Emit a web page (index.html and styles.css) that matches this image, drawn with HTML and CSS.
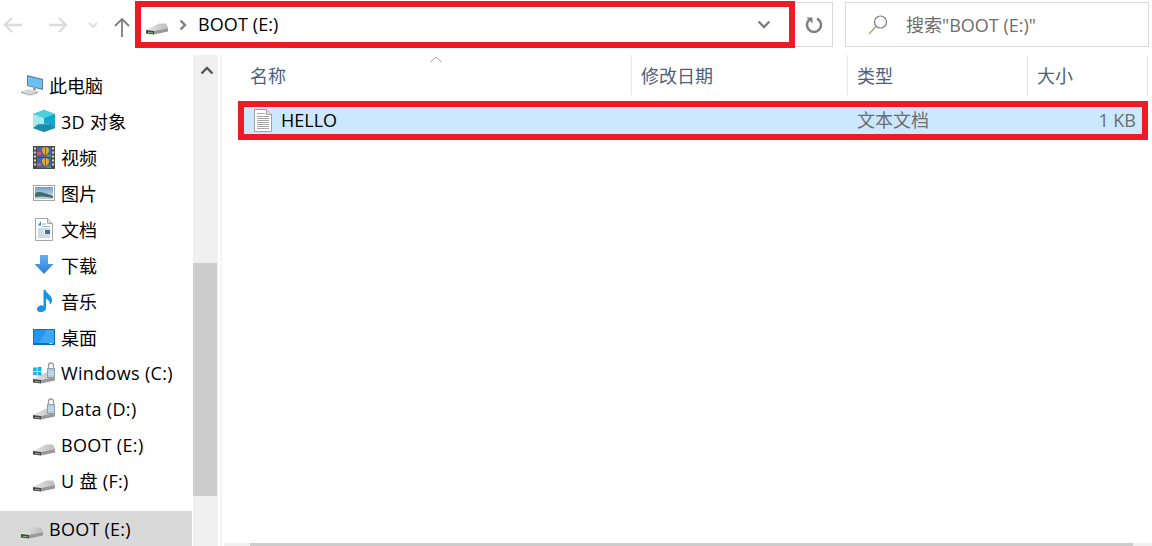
FILE: index.html
```html
<!doctype html>
<html lang="zh-CN">
<head>
    <meta charset="UTF-8">
    <title>BOOT (E:)</title>
    <link rel="stylesheet" href="styles.css">
</head>
<body>
    <svg class="defs" width="0" height="0">
      <defs>
        <linearGradient id="driveTop" x1="0" y1="0" x2="1" y2="0">
          <stop offset="0" stop-color="#e6e6e6"/>
          <stop offset="1" stop-color="#bcbcbc"/>
        </linearGradient>
        <linearGradient id="arrowBlue" x1="0" y1="0" x2="0" y2="1">
          <stop offset="0" stop-color="#62aef0"/>
          <stop offset="1" stop-color="#2a80d4"/>
        </linearGradient>
        <linearGradient id="sky" x1="0" y1="0" x2="0" y2="1">
          <stop offset="0" stop-color="#6f9fc8"/>
          <stop offset="1" stop-color="#dfe9ee"/>
        </linearGradient>
        <symbol id="drive" viewBox="0 0 24 24">
          <path d="M1 17 14 10.500h7l2 4.500-14 3z" fill="url(#driveTop)"/>
          <path d="M9 18 23 15v3.500L9 21.500z" fill="#989898"/>
          <path d="M1 17l8 1v3.500l-8-1z" fill="#444"/>
          <path d="M3 18.800l5 .600v1l-5-.600z" fill="#7ec27a"/>
        </symbol>
        <symbol id="lock" viewBox="0 0 8 16">
          <path d="M1.500 7V3.500a2.500 2.500 0 0 1 5 0V7" fill="none" stroke="#9c9c9c" stroke-width="1.300"/>
          <rect x=".500" y="6.500" width="7" height="9" fill="#aecbde" stroke="#8ca2b0"/>
          <path d="M1 10h6M1 12.500h6" stroke="#d0e2ed"/>
        </symbol>
      </defs>
    </svg>

    <header class="toolbar">
      <div class="nav">
        <svg class="nav-btn" width="20" height="18" viewBox="0 0 20 18"><path d="M19 9H2M9 2 2 9l7 7" fill="none" stroke="#dcdcdc" stroke-width="2.400"/></svg>
        <svg class="nav-btn next" width="20" height="18" viewBox="0 0 20 18"><path d="M0 9h17M10 2l7 7-7 7" fill="none" stroke="#dcdcdc" stroke-width="2.400"/></svg>
        <svg class="nav-caret" width="10" height="6" viewBox="0 0 10 6"><path d="m1 1 4 4 4-4" fill="none" stroke="#dcdcdc" stroke-width="1.800"/></svg>
        <svg class="nav-up" width="16" height="20" viewBox="0 0 16 20"><path d="M8 20V2M1 9l7-7 7 7" fill="none" stroke="#7f7f7f" stroke-width="1.800"/></svg>
      </div>
      <div class="address">
        <svg class="icon" width="24" height="24"><use href="#drive"/></svg>
        <svg class="crumb" width="8" height="12" viewBox="0 0 8 12"><path d="m1.500 1.500 4.500 4.500-4.500 4.500" fill="none" stroke="#7f7f7f" stroke-width="2.400"/></svg>
        <span class="address-text">BOOT (E:)</span>
        <svg class="address-caret" width="14" height="9" viewBox="0 0 14 9"><path d="m1.500 1.500 5.500 5.500 5.500-5.500" fill="none" stroke="#7f7f7f" stroke-width="2.400"/></svg>
      </div>
      <div class="refresh">
        <svg width="18" height="19" viewBox="0 0 18 19"><path d="M6 3.600a7 7 0 1 0 6 0" fill="none" stroke="#7f7f7f" stroke-width="2.400"/><path d="M1.500 2.500H7.500V8.500z" fill="#7f7f7f"/></svg>
      </div>
      <div class="search">
        <svg width="22" height="22" viewBox="0 0 22 22"><circle cx="13.500" cy="8" r="6" fill="none" stroke="#7f7f7f" stroke-width="1.200"/><path d="M9 12.500 2 20" stroke="#c8a078" stroke-width="1.500"/></svg>
        <span>搜索"BOOT (E:)"</span>
      </div>
    </header>

    <div class="main">
      <nav class="sidebar">
        <ul class="tree">
          <li class="tree-item top">
            <svg class="icon" width="24" height="24" viewBox="0 0 24 24">
              <path d="M7 1 23 5v11L7 12z" fill="#5d7f9c"/>
              <path d="M8 2.500 22 6v8.500L8 11.500z" fill="#6cc0f6"/>
              <path d="M13 13.500h3v3h-3z" fill="#9aa4ac"/>
              <path d="M1 17.500 9 15l9 2.500-8 3z" fill="#d5d9dc"/>
              <path d="M1 17.500v1.500l9 2.500 8-2.500v-1.500l-8 3z" fill="#a2a9ae"/>
            </svg>
            <span>此电脑</span>
          </li>
          <li class="tree-item">
            <svg class="icon" width="24" height="24" viewBox="0 0 24 24">
              <path d="M12 0 23 4v14l-11 4L1 18V4z" fill="#14a4cc"/>
              <path d="M12 0 23 4 12 8 1 4z" fill="#4fcfde"/>
              <path d="M1 4l11 4v14L1 18z" fill="#a8ecee"/>
              <path d="M1 18l5.500-4H17l6 4-11 4z" fill="#1a8da8"/>
              <path d="M6.500 4v10M6.500 14H17" stroke="#7fdde6" stroke-width=".600" fill="none"/>
            </svg>
            <span class="en">3D 对象</span>
          </li>
          <li class="tree-item">
            <svg class="icon" width="24" height="24" viewBox="0 0 24 24">
              <rect x="1" y="0" width="22" height="23" fill="#4a4a4a"/>
              <path d="M2 1.500h2v2H2zM2 5.500h2v2H2zM2 9.500h2v2H2zM2 13.500h2v2H2zM2 17.500h2v2H2zM20 1.500h2v2h-2zM20 5.500h2v2h-2zM20 9.500h2v2h-2zM20 13.500h2v2h-2zM20 17.500h2v2h-2z" fill="#d8d8d8"/>
              <rect x="5" y="1" width="14" height="10" fill="#3d68b0"/>
              <rect x="5" y="12" width="14" height="10" fill="#3d68b0"/>
              <path d="M10 4.500a3.500 3.500 0 0 1 7 0c0 2-2 3-2.500 4.500h-2C12 7.500 10 6.500 10 4.500zM10 15.500a3.500 3.500 0 0 1 7 0c0 2-2 3-2.500 4.500h-2c-.500-1.500-2.500-2.500-2.500-4.500z" fill="#e9a82a"/>
              <path d="M13.500 1v8M13.500 12v8" stroke="#a84f32"/>
              <path d="M5 6h4v3H5zM5 17h4v3H5z" fill="#d8567c"/>
              <path d="M15 9h4v2h-4zM15 20h4v2h-4z" fill="#58a050"/>
            </svg>
            <span>视频</span>
          </li>
          <li class="tree-item">
            <svg class="icon" width="24" height="24" viewBox="0 0 24 24">
              <rect x="1.500" y="3.500" width="21" height="15" fill="#fff" stroke="#a6a6a6"/>
              <rect x="3" y="5" width="18" height="12" fill="url(#sky)"/>
              <path d="M3 11c4-2 7-1 18 3v3H3z" fill="#3f6f70"/>
              <path d="M3 15c6-1 12-.500 18 1v1H3z" fill="#c3cfc4"/>
            </svg>
            <span>图片</span>
          </li>
          <li class="tree-item">
            <svg class="icon" width="24" height="24" viewBox="0 0 24 24">
              <path d="M3.500.500h12l5 5v17h-17z" fill="#fff" stroke="#a6a6a6"/>
              <path d="M15.500.500v5h5" fill="#dedede" stroke="#a6a6a6"/>
              <path d="M6 7.500 9 3v4.500z" fill="#2a88d8"/>
              <path d="M10 6h4M10 8.500h8M6 11h12M6 13h6M6 15h6M6 17h12M6 19h12" stroke="#9fb6c8"/>
              <rect x="13" y="12" width="5" height="4" fill="#3f6f96"/>
            </svg>
            <span>文档</span>
          </li>
          <li class="tree-item">
            <svg class="icon" width="24" height="24" viewBox="0 0 24 24">
              <path d="M8 1h8v9h5.500L12 20 2.500 10H8z" fill="url(#arrowBlue)"/>
            </svg>
            <span>下载</span>
          </li>
          <li class="tree-item">
            <svg class="icon" width="24" height="24" viewBox="0 0 24 24">
              <path d="M11.500 0h2c1 4 6.500 5 6.500 10 0 2-1 3.500-2 4.500 0-3-2-5-4-6V18c0 3-3 4.500-6 4-3-.500-4-3-2-5s3.500-2 5.500-1z" fill="#1594e8"/>
            </svg>
            <span>音乐</span>
          </li>
          <li class="tree-item">
            <svg class="icon" width="24" height="24" viewBox="0 0 24 24">
              <rect x="1" y="3" width="22" height="16" fill="#0b70bc"/>
              <rect x="2" y="4" width="20" height="13" fill="#2596f0"/>
              <path d="M7 17 15 4h7v13z" fill="#3ea8f6"/>
              <path d="M17 17.500h4" stroke="#a9d6f5"/>
            </svg>
            <span>桌面</span>
          </li>
          <li class="tree-item">
            <svg class="icon" width="24" height="24" viewBox="0 0 24 24">
              <use href="#drive"/>
              <use href="#lock" x="15" y="0" width="8" height="16"/>
              <path d="M1 5.500h3.800V9H1zM5.500 5h4v4h-4zM1 9.700h3.800V13H1zM5.500 9.700h4V13.500h-4z" fill="#12b5ee"/>
            </svg>
            <span class="en">Windows (C:)</span>
          </li>
          <li class="tree-item">
            <svg class="icon" width="24" height="24" viewBox="0 0 24 24">
              <use href="#drive"/>
              <use href="#lock" x="15" y="0" width="8" height="16"/>
            </svg>
            <span class="en">Data (D:)</span>
          </li>
          <li class="tree-item">
            <svg class="icon" width="24" height="24"><use href="#drive"/></svg>
            <span class="en">BOOT (E:)</span>
          </li>
          <li class="tree-item">
            <svg class="icon" width="24" height="24"><use href="#drive"/></svg>
            <span class="en mixed">U 盘 (F:)</span>
          </li>
        </ul>
        <div class="tree-item top current">
          <svg class="icon" width="24" height="24"><use href="#drive"/></svg>
          <span>BOOT (E:)</span>
        </div>
      </nav>

      <div class="side-scroll">
        <svg class="scroll-up" width="14" height="9" viewBox="0 0 14 9"><path d="M1.500 7.500 7 2l5.500 5.500" fill="none" stroke="#555" stroke-width="2.400"/></svg>
        <div class="side-thumb"></div>
      </div>

      <section class="files">
        <div class="columns">
          <div class="col col-name">名称
            <svg class="sort" width="12" height="7" viewBox="0 0 12 7"><path d="M.500 6 6 1l5.500 5" fill="none" stroke="#9a9a9a"/></svg>
          </div>
          <div class="col col-date">修改日期</div>
          <div class="col col-type">类型</div>
          <div class="col col-size">大小</div>
        </div>
        <div class="file-row">
          <div class="file-name">
            <svg width="18" height="23" viewBox="0 0 18 23">
              <path d="M.500.500h12l5 5v17H.500z" fill="#fff" stroke="#a0a0a0"/>
              <path d="M12.500.500v5h5" fill="#e0e0e0" stroke="#a0a0a0"/>
              <path d="M3 4.500h8M3 7.500h12M3 9.500h12M3 11.500h12M3 13.500h12M3 15.500h12M3 17.500h12M3 19.500h12" stroke="#a8a8a8"/>
            </svg>
            <span>HELLO</span>
          </div>
          <div class="file-type">文本文档</div>
          <div class="file-size">1 KB</div>
        </div>
        <div class="h-scroll"><div class="h-thumb"></div></div>
      </section>
    </div>
</body>
</html>
```

FILE: styles.css
```css
* {
  box-sizing: border-box;
}
html, body {
  height: 100%;
}
body {
  margin: 0;
  display: flex;
  flex-direction: column;
  overflow: hidden;
  background-color: #fff;
  color: #000;
  font-family: "Open Sans", "Noto Sans CJK SC", sans-serif;
  font-size: 18px;
}
.defs {
  position: absolute;
}
.toolbar {
  display: flex;
  height: 55px;
  padding-top: 1px;
  flex: none;
}
.nav {
  display: flex;
  align-items: center;
  width: 135px;
  height: 47px;
  padding-left: 3px;
}
.nav-btn {
  margin-right: 26px;
}
.nav-btn.next {
  margin-right: 19px;
}
.nav-caret {
  margin-right: 17px;
}
.nav-up {
  margin-top: 4px;
  margin-left: -1px;
}
.address {
  display: flex;
  align-items: center;
  width: 660px;
  height: 47px;
  border: 6px solid #ed1c24;
  padding-left: 4px;
  padding-right: 18px;
}
.crumb {
  margin-left: 10px;
  margin-right: 11px;
}
.address-text {
  flex: 1;
  margin-bottom: 2px;
  letter-spacing: .1px;
}
.refresh {
  display: flex;
  align-items: center;
  justify-content: center;
  width: 38px;
  height: 45px;
  margin-top: 1px;
  border: 1px solid #d9d9d9;
  border-left: 0;
}
.search {
  display: flex;
  align-items: center;
  width: 304px;
  height: 45px;
  margin-top: 1px;
  margin-left: 12px;
  padding-left: 21px;
  border: 1px solid #d9d9d9;
  color: #6d6d6d;
}
.search span {
  margin-left: 17px;
  margin-bottom: 2px;
}
.main {
  display: flex;
  flex: 1;
  min-height: 0;
}
.sidebar {
  display: flex;
  flex-direction: column;
  width: 193px;
  padding-top: 13px;
}
.tree {
  flex: 1;
  margin: 0;
  padding: 0;
  list-style: none;
}
.tree-item {
  display: flex;
  align-items: center;
  height: 36px;
  padding-left: 32px;
  white-space: nowrap;
}
.tree-item .icon {
  flex: none;
  margin-right: 5px;
}
.tree-item.top {
  padding-left: 20px;
}
.tree .tree-item span {
  margin-bottom: 3px;
}
.tree .tree-item .mixed {
  margin-bottom: 5px;
}
.en {
  letter-spacing: .33px;
}
.tree-item.current {
  height: 35px;
  margin-right: 1px;
  background-color: #d9d9d9;
  letter-spacing: .25px;
}
.side-scroll {
  display: flex;
  flex-direction: column;
  width: 25px;
  background-color: #f0f0f0;
}
.scroll-up {
  margin: 11px 0 0 7px;
}
.side-thumb {
  height: 233px;
  margin-top: 188px;
  margin-right: 1px;
  background-color: #cdcdcd;
}
.files {
  display: flex;
  flex-direction: column;
  flex: 1;
  margin-left: 2px;
  border-left: 2px solid #f5f5f5;
  padding-left: 16px;
}
.columns {
  display: flex;
  height: 40px;
  color: #4c607a;
  flex: none;
}
.col {
  display: flex;
  align-items: center;
  padding-left: 9px;
  border-right: 1px solid #e5e5e5;
}
.col-name {
  position: relative;
  width: 394px;
  padding-left: 12px;
}
.col-date {
  width: 216px;
}
.col-type {
  width: 180px;
}
.col-size {
  width: 120px;
}
.sort {
  position: absolute;
  left: 192px;
  top: 1px;
}
.file-row {
  display: flex;
  align-items: center;
  width: 910px;
  height: 39px;
  margin-top: 6px;
  border: 6px solid #ed1c24;
  background-color: #cce8ff;
}
.file-name {
  display: flex;
  align-items: center;
  width: 613px;
  padding-left: 10px;
}
.file-name span {
  margin-left: 9px;
  margin-bottom: 2px;
}
.file-type {
  width: 180px;
  margin-bottom: 3px;
  color: #6d6d6d;
}
.file-size {
  flex: 1;
  padding-right: 6px;
  margin-bottom: 2px;
  color: #6d6d6d;
  text-align: right;
}
.h-scroll {
  margin-top: auto;
  margin-left: -14px;
  height: 3px;
  background-color: #f0f0f0;
}
.h-thumb {
  height: 3px;
  margin-left: 26px;
  margin-right: 19px;
  background-color: #cdcdcd;
}
```
